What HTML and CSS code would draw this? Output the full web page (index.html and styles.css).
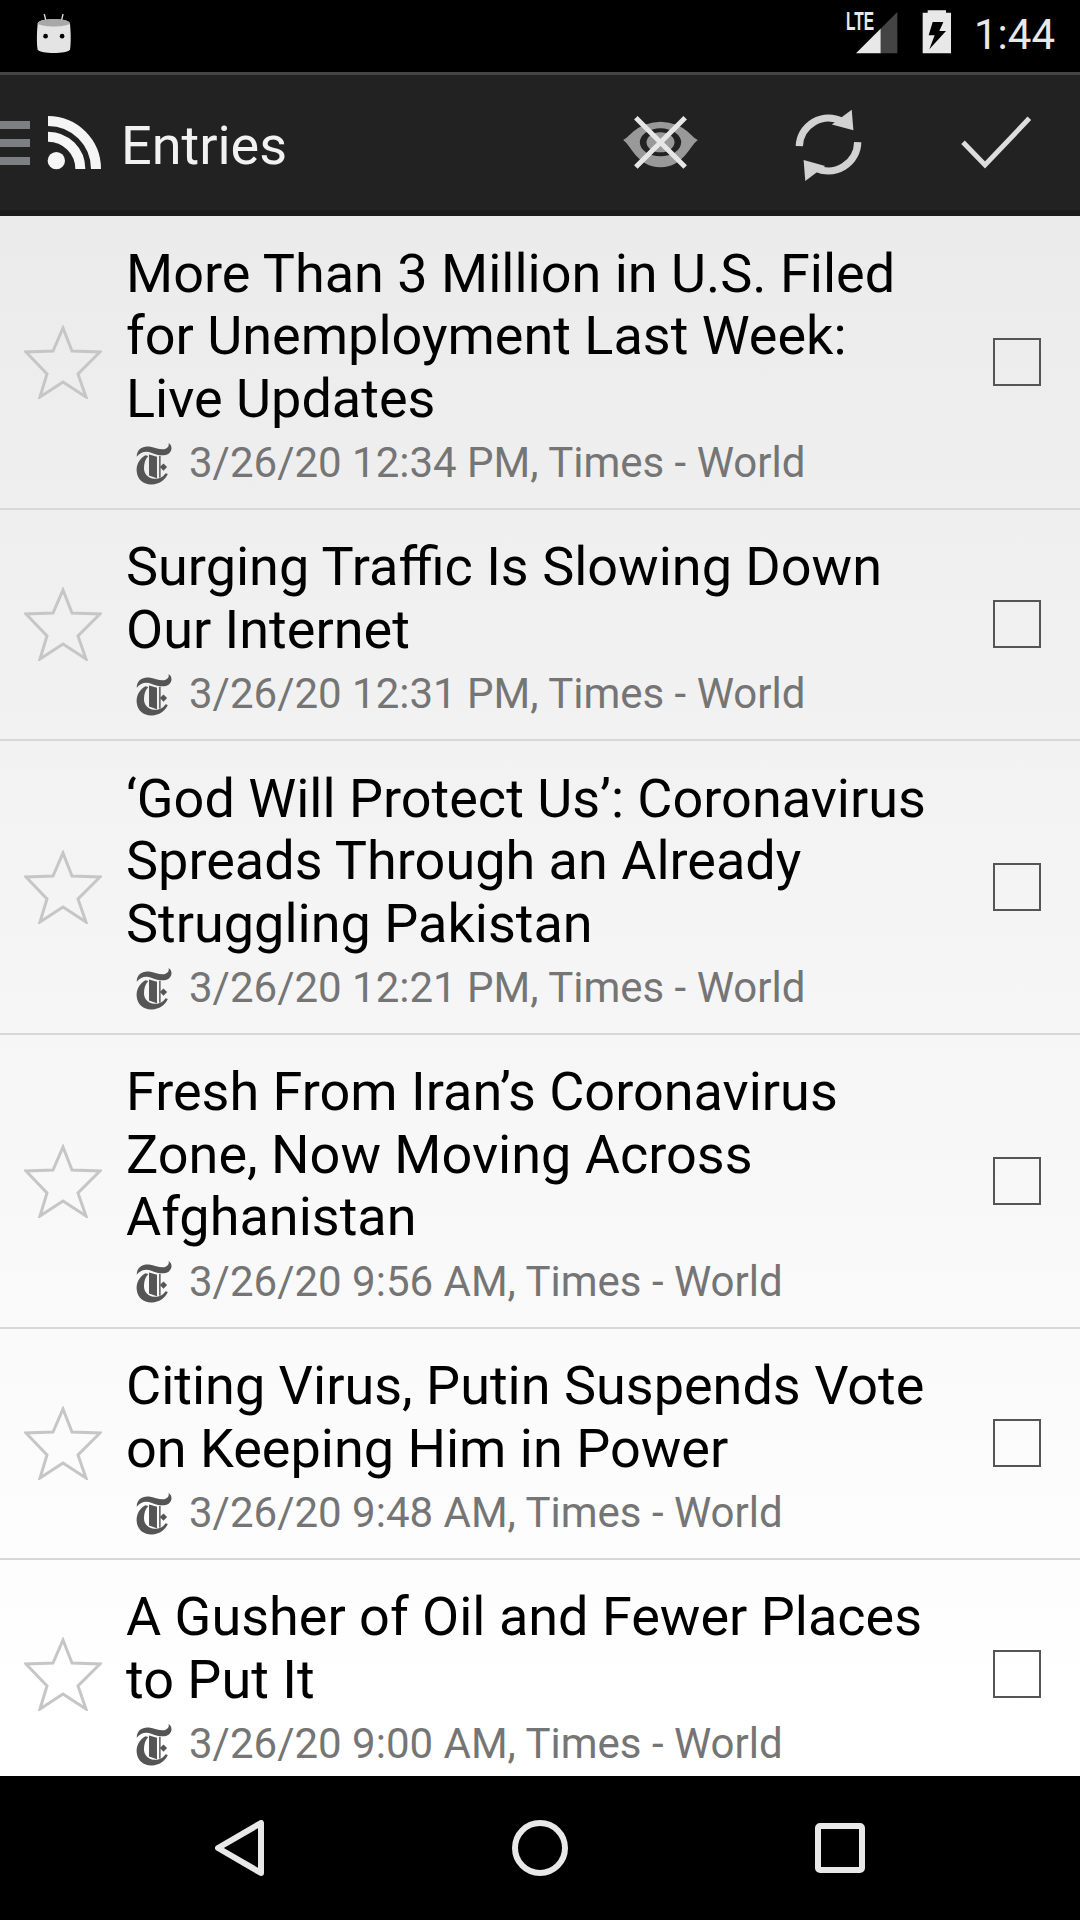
FILE: index.html
```html
<!DOCTYPE html>
<html lang="en">
<head>
  <meta charset="UTF-8" />
  <title>Entries</title>
  <link rel="stylesheet" href="styles.css">
</head>
<body>
  <svg class="defs" width="0" height="0">
    <symbol id="star" viewBox="24 326 78 74">
      <polygon points="63,329 72,352 100,353 78,375 86,398 63,383 40,398 47,375 26,353 53,352" fill="none" stroke="#c6c6c6" stroke-width="3"/>
    </symbol>
    <symbol id="tlogo" viewBox="40 20 110 130">
      <path d="M50 66C50 46 66 36 84 38C102 40 118 50 130 44C138 40 140 34 138 28C148 34 150 48 138 58C126 66 108 62 92 56C76 50 62 52 50 66Z" fill="#555"/>
      <path d="M74 62C56 72 48 90 50 108C52 130 70 144 92 143C112 142 128 132 136 114L130 112C122 124 110 128 98 127C82 126 70 114 70 98C70 84 74 72 82 64Z" fill="#555"/>
      <path d="M84 60L106 66V126L84 118Z" fill="#555"/>
      <rect x="112" y="64" width="4" height="60" fill="#555"/>
      <path d="M124 85L134 95L124 105L114 95Z" fill="#555"/>
    </symbol>
  </svg>

  <div class="app">
    <div class="status-bar">
      <svg class="android" viewBox="105 35 112 128">
        <path d="M133 40L139 64M190 40L184 64" stroke="#ddd" stroke-width="4" fill="none"/>
        <path d="M113 70C113 60 135 56 162 56C189 56 211 60 211 70C214 100 214 130 211 148C205 155 185 158 162 158C139 158 119 155 113 148C110 130 110 100 113 70Z" fill="#e4e4e4"/>
        <path d="M113 70C113 60 135 56 162 56C189 56 211 60 211 70C190 80 134 80 113 70Z" fill="#a8a8a8"/>
        <circle cx="137" cy="107" r="7" fill="#000"/>
        <circle cx="187" cy="107" r="7" fill="#000"/>
      </svg>
      <div class="status-right">
        <div class="signal">
          <svg class="signal-icon" viewBox="765 42 130 130">
            <polygon points="768,170 843,95 843,170" fill="#e8e8e8"/>
            <polygon points="843,95 893,45 893,170 843,170" fill="#444"/>
          </svg>
          <span class="lte">LTE</span>
        </div>
        <svg class="battery" viewBox="968 42 90 132">
          <path d="M985 50V43H1040V50H1055V172H970V50Z" fill="#e8e8e8"/>
          <polygon points="1000,78 1032,78 1020,105 1040,105 990,160 1006,118 988,118" fill="#000"/>
        </svg>
        <span class="clock">1:44</span>
      </div>
    </div>

    <div class="toolbar">
      <div class="home">
        <div class="drawer"><i></i><i></i><i></i></div>
        <svg class="rss" viewBox="140 350 162 165">
          <circle cx="168" cy="487" r="26" fill="#f5f5f5"/>
          <path d="M143 415A97 97 0 0 1 240 512" stroke="#f5f5f5" stroke-width="30" fill="none"/>
          <path d="M143 368A144 144 0 0 1 287 512" stroke="#f5f5f5" stroke-width="30" fill="none"/>
        </svg>
        <span class="screen-title">Entries</span>
      </div>
      <div class="actions">
        <div class="action">
          <svg class="eye" viewBox="65 350 230 165">
            <path d="M68 425C95 410 105 375 180 370C255 375 265 410 292 425C265 445 250 505 180 507C110 505 95 445 68 425Z" fill="#999"/>
            <ellipse cx="180" cy="432" rx="62" ry="42" fill="#222"/>
            <ellipse cx="180" cy="432" rx="42" ry="30" fill="#999"/>
            <path d="M106 358L254 506M254 358L106 506" stroke="#e6e6e6" stroke-width="15" fill="none"/>
          </svg>
        </div>
        <div class="action">
          <svg class="sync" viewBox="585 325 200 220">
            <path d="M597 440A88 88 0 0 1 725 365" stroke="#d2d2d2" stroke-width="22" fill="none"/>
            <polygon points="755,330 760,392 695,375" fill="#d2d2d2"/>
            <path d="M773 428A88 88 0 0 1 645 505" stroke="#d2d2d2" stroke-width="22" fill="none"/>
            <polygon points="615,545 610,482 675,500" fill="#d2d2d2"/>
          </svg>
        </div>
        <div class="action">
          <svg class="check" viewBox="1080 350 216 165">
            <polyline points="1089,432 1155,500 1288,360" stroke="#ddd" stroke-width="15" fill="none"/>
          </svg>
        </div>
      </div>
    </div>

    <div class="entries">
      <div class="entry">
        <svg class="star"><use href="#star"/></svg>
        <div class="entry-body">
          <div class="entry-title">More Than 3 Million in U.S. Filed for Unemployment Last Week: Live Updates</div>
          <div class="entry-meta"><svg class="feed-logo"><use href="#tlogo"/></svg>3/26/20 12:34 PM, Times - World</div>
        </div>
        <div class="checkbox"></div>
      </div>
      <div class="entry">
        <svg class="star"><use href="#star"/></svg>
        <div class="entry-body">
          <div class="entry-title">Surging Traffic Is Slowing Down Our Internet</div>
          <div class="entry-meta"><svg class="feed-logo"><use href="#tlogo"/></svg>3/26/20 12:31 PM, Times - World</div>
        </div>
        <div class="checkbox"></div>
      </div>
      <div class="entry">
        <svg class="star"><use href="#star"/></svg>
        <div class="entry-body">
          <div class="entry-title">‘God Will Protect Us’: Coronavirus Spreads Through an Already Struggling Pakistan</div>
          <div class="entry-meta"><svg class="feed-logo"><use href="#tlogo"/></svg>3/26/20 12:21 PM, Times - World</div>
        </div>
        <div class="checkbox"></div>
      </div>
      <div class="entry">
        <svg class="star"><use href="#star"/></svg>
        <div class="entry-body">
          <div class="entry-title">Fresh From Iran’s Coronavirus Zone, Now Moving Across Afghanistan</div>
          <div class="entry-meta"><svg class="feed-logo"><use href="#tlogo"/></svg>3/26/20 9:56 AM, Times - World</div>
        </div>
        <div class="checkbox"></div>
      </div>
      <div class="entry">
        <svg class="star"><use href="#star"/></svg>
        <div class="entry-body">
          <div class="entry-title">Citing Virus, Putin Suspends Vote on Keeping Him in Power</div>
          <div class="entry-meta"><svg class="feed-logo"><use href="#tlogo"/></svg>3/26/20 9:48 AM, Times - World</div>
        </div>
        <div class="checkbox"></div>
      </div>
      <div class="entry">
        <svg class="star"><use href="#star"/></svg>
        <div class="entry-body">
          <div class="entry-title">A Gusher of Oil and Fewer Places to Put It</div>
          <div class="entry-meta"><svg class="feed-logo"><use href="#tlogo"/></svg>3/26/20 9:00 AM, Times - World</div>
        </div>
        <div class="checkbox"></div>
      </div>
    </div>

    <div class="nav-bar">
      <svg class="nav-back" viewBox="0 0 50 56">
        <path d="M46 3V53L3 28Z" stroke="#e8e8e8" stroke-width="6" stroke-linejoin="round" fill="none"/>
      </svg>
      <svg class="nav-home" viewBox="0 0 56 56">
        <circle cx="28" cy="28" r="25" stroke="#e8e8e8" stroke-width="6" fill="none"/>
      </svg>
      <svg class="nav-recent" viewBox="0 0 50 50">
        <rect x="3" y="3" width="44" height="44" rx="2" stroke="#e8e8e8" stroke-width="6" fill="none"/>
      </svg>
    </div>
  </div>
</body>
</html>
```
FILE: styles.css
```css
html, body {
  margin: 0;
  padding: 0;
}
body {
  font-family: Roboto, sans-serif;
  background: #000;
}
.defs {
  position: absolute;
}
.app {
  width: 1080px;
  height: 1920px;
  display: flex;
  flex-direction: column;
  overflow: hidden;
}

/* status bar */
.status-bar {
  height: 72px;
  background: #000;
  display: flex;
  justify-content: space-between;
  align-items: center;
  padding: 0 25px 0 35px;
  flex: none;
}
.android {
  width: 37px;
  height: 43px;
  margin-top: -6px;
}
.status-right {
  display: flex;
  align-items: center;
}
.signal {
  position: relative;
  width: 43px;
  height: 43px;
  margin-right: 24px;
  margin-top: -8px;
}
.signal-icon {
  width: 43px;
  height: 43px;
  display: block;
}
.lte {
  position: absolute;
  left: -9px;
  top: -2px;
  font-family: "Liberation Sans Narrow", "Liberation Sans", sans-serif;
  font-weight: bold;
  font-size: 25px;
  line-height: 25px;
  color: #e8e8e8;
  transform: scaleX(0.62);
  transform-origin: left top;
}
.battery {
  width: 30px;
  height: 44px;
  margin-right: 22px;
  margin-top: -8px;
}
.clock {
  font-size: 42px;
  line-height: 50px;
  color: #e8e8e8;
  margin-top: -2px;
}

/* toolbar */
.toolbar {
  height: 144px;
  flex: none;
  box-sizing: border-box;
  background: #222;
  border-top: 3px solid #444;
  border-bottom: 6px solid #1b1b1b;
  display: flex;
  justify-content: space-between;
  align-items: center;
}
.home {
  display: flex;
  align-items: center;
}
.drawer {
  width: 30px;
  display: flex;
  flex-direction: column;
  gap: 10px;
  margin-right: 17px;
}
.drawer i {
  display: block;
  height: 8px;
  background: #7d7f82;
}
.rss {
  width: 54px;
  height: 55px;
}
.screen-title {
  font-size: 54px;
  line-height: 60px;
  color: #f2f2f2;
  margin-left: 20px;
  margin-top: 6px;
}
.actions {
  display: flex;
}
.action {
  width: 168px;
  height: 135px;
  display: flex;
  justify-content: center;
  align-items: center;
}
.eye {
  width: 77px;
  height: 55px;
}
.sync {
  width: 67px;
  height: 73px;
  margin-top: 4px;
}
.check {
  width: 72px;
  height: 55px;
}

/* list */
.entries {
  flex: 1;
  min-height: 0;
  overflow: hidden;
  background: linear-gradient(#ebebeb, #fff 1500px);
}
.entry {
  display: flex;
  align-items: center;
  box-sizing: border-box;
  border-bottom: 2px solid #d8d8d8;
}
.entry:last-child {
  border-bottom: none;
}
.star {
  width: 78px;
  height: 74px;
  margin-left: 24px;
  margin-right: 24px;
  flex: none;
}
.entry-body {
  flex: 1;
  min-width: 0;
  padding: 26.5px 0 19.75px;
}
.entry-title {
  font-size: 54px;
  line-height: 62.5px;
  color: #000;
}
.entry-meta {
  display: flex;
  align-items: center;
  font-size: 42px;
  line-height: 50px;
  color: #757575;
  margin-top: 8px;
}
.feed-logo {
  width: 40px;
  height: 47px;
  margin-left: 7px;
  margin-right: 16px;
  flex: none;
}
.checkbox {
  width: 48px;
  height: 48px;
  box-sizing: border-box;
  border: 2px solid #555;
  margin-left: 48px;
  margin-right: 39px;
  flex: none;
}

/* nav bar */
.nav-bar {
  height: 144px;
  flex: none;
  background: #000;
  position: relative;
  display: flex;
  align-items: center;
  padding-left: 215px;
}
.nav-back {
  width: 50px;
  height: 56px;
  margin-right: 247px;
}
.nav-home {
  width: 56px;
  height: 56px;
  margin-right: 247px;
}
.nav-recent {
  width: 50px;
  height: 50px;
}
```
